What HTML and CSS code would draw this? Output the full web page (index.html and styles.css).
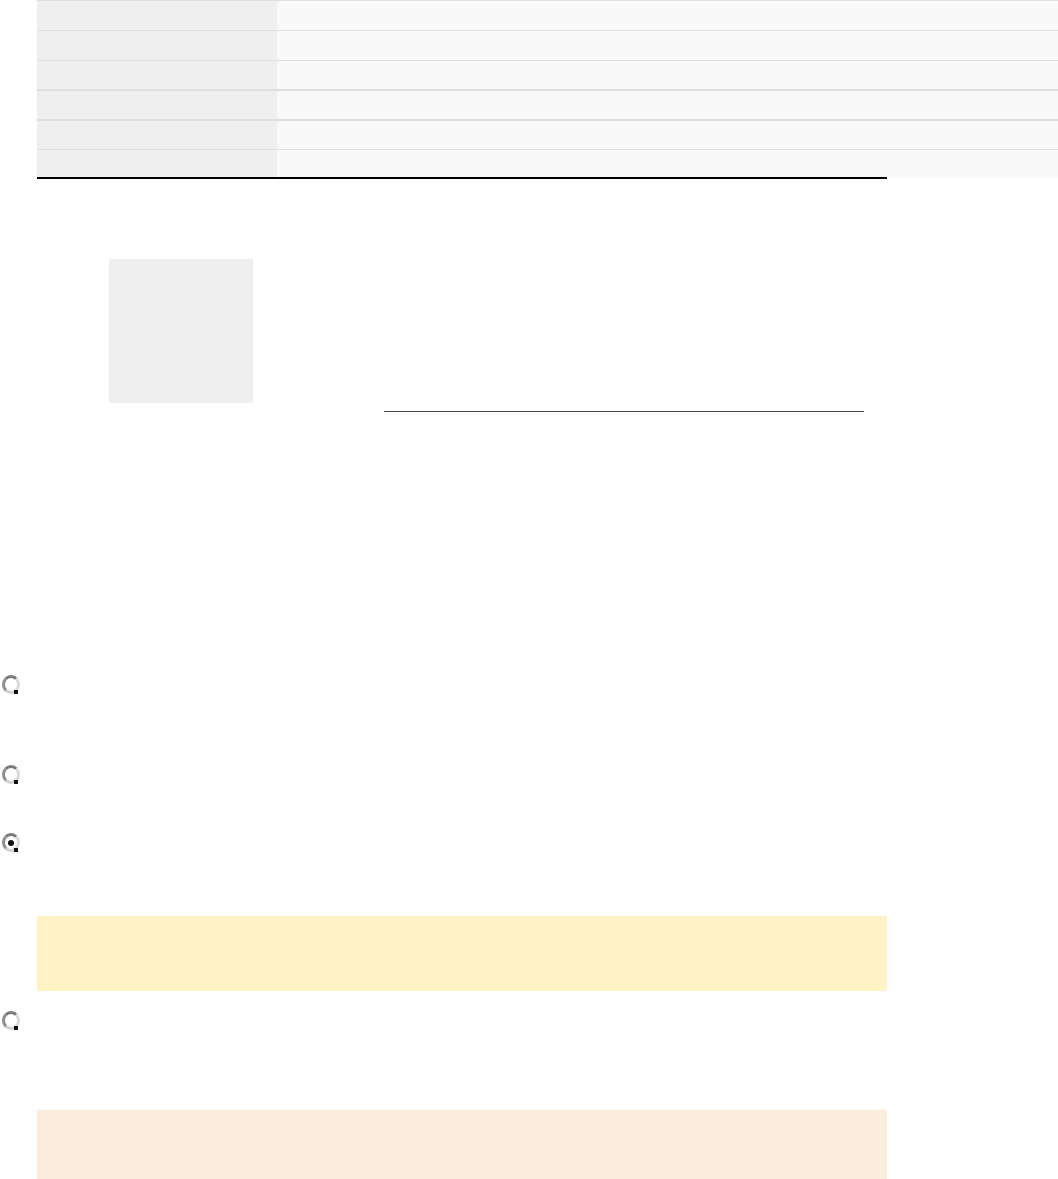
FILE: index.html
```html
<!DOCTYPE html>
<html lang="en">
<head>
<meta charset="utf-8">
<title>Page</title>
<link rel="stylesheet" href="styles.css">
</head>
<body>
<div class="page">
  <div class="specs">
    <div class="row"><div class="key"></div><div class="val"></div></div>
    <div class="row"><div class="key"></div><div class="val"></div></div>
    <div class="row short"><div class="key"></div><div class="val"></div></div>
    <div class="row thick"><div class="key"></div><div class="val"></div></div>
    <div class="row thick"><div class="key"></div><div class="val"></div></div>
    <div class="row last"><div class="key"></div><div class="val"></div></div>
  </div>
  <div class="rule"></div>

  <div class="figure">
    <div class="thumb"></div>
  </div>
  <div class="caption-line"></div>

  <div class="options">
    <div class="option opt1"><span class="radio"></span></div>
    <div class="option opt2"><span class="radio"></span></div>
    <div class="option opt3"><span class="radio checked"></span></div>
    <div class="note note-yellow"></div>
    <div class="option opt4"><span class="radio"></span></div>
    <div class="note note-peach"></div>
  </div>
</div>
</body>
</html>
```

FILE: styles.css
```css
html, body {
  margin: 0;
  padding: 0;
  background: #ffffff;
  font-family: "Liberation Sans", Arial, sans-serif;
  overflow: hidden;
}

.page {
  width: 1058px;
}

.specs {
  margin-left: 37px;
  width: 1021px;
}

.row {
  display: flex;
  height: 30px;
  box-sizing: border-box;
  border-top: 1px solid #dfe0e4;
}
.row.short { height: 29px; }
.row.thick { border-top: 2px solid #dcdee2; }
.row.last { height: 28px; }

.key {
  width: 240px;
  background: #efeff0;
}
.val {
  flex: 1;
  background: #f9f9f9;
}

.rule {
  margin-left: 37px;
  width: 850px;
  height: 2px;
  background: #000000;
}

.figure {
  margin-top: 80px;
  margin-left: 109px;
}
.thumb {
  width: 144px;
  height: 144px;
  background: #efefef;
}

.caption-line {
  margin-top: 8px;
  margin-left: 384px;
  width: 480px;
  height: 1px;
  background: #444444;
}

.options {
  margin-top: 263px;
  padding-left: 2px;
}

.option {
  display: flex;
  align-items: flex-start;
}
.opt1 { height: 90px; }
.opt2 { height: 68px; }
.opt3 { height: 83px; }
.opt4 { height: 99px; }

.radio {
  width: 12px;
  height: 13px;
  border-radius: 50%;
  border: 3px solid #8f8f8f;
  border-top-color: #7a7a7a;
  border-right-color: #dadada;
  border-bottom-color: #d2d2d2;
  box-sizing: content-box;
  display: flex;
  align-items: center;
  justify-content: center;
  position: relative;
}
.radio::after {
  content: "";
  position: absolute;
  right: -1px;
  bottom: -3px;
  width: 4px;
  height: 4px;
  background: #111;
}
.radio.checked::before {
  content: "";
  width: 6px;
  height: 6px;
  border-radius: 50%;
  background: #111;
}

.note {
  margin-left: 35px;
  width: 850px;
}
.note-yellow {
  height: 75px;
  margin-bottom: 20px;
  background: #fff2c4;
}
.note-peach {
  height: 70px;
  background: #faeddc;
}
```
